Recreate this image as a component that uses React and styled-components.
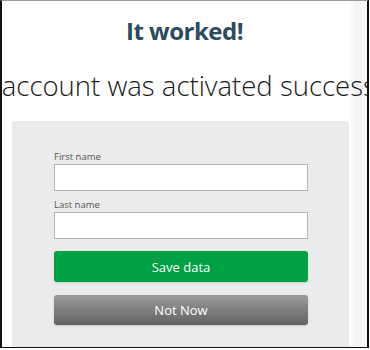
import React from 'react';
import styled, { createGlobalStyle } from 'styled-components';

// style //
const GlobalStyle = createGlobalStyle`
    html, body {
        margin: 0;
        padding: 0;
        background: #FFFFFF;
    }
    * { box-sizing: border-box; }
`;

const Frame = styled.div`
    width: 369px;
    height: 348px;
    border-top: 1px solid #9A9A9A;
    border-left: 2px solid #111111;
    border-right: 2px solid #111111;
    border-bottom: 1px solid #111111;
    background: linear-gradient(to right, #FFFFFF 0%, #FFFFFF 95%, #F3F3F3 97%, #FAFAFA 100%);
    overflow: hidden;
    font-family: "Open Sans", "Liberation Sans", sans-serif;
`;

const Title = styled.h1`
    margin: 0;
    padding-top: 14px;
    text-align: center;
    font-size: 24px;
    font-weight: 700;
    letter-spacing: -0.5px;
    line-height: 32px;
    color: #2C4B5E;
`;

const Message = styled.div`
    margin-top: 19px;
    display: flex;
    justify-content: center;
    white-space: nowrap;
    font-size: 27.5px;
    font-weight: 300;
    line-height: 40px;
    color: #1A1A1A;
`;

const Card = styled.div`
    margin: 15px 0 0 10px;
    width: 337px;
    height: 240px;
    padding: 29px 41px 0 42px;
    background: #EBEBEB;
    border-radius: 3px;
`;

const Label = styled.label`
    display: block;
    font-size: 9.5px;
    line-height: 13px;
    color: #555555;
`;

const Input = styled.input`
    display: block;
    width: 100%;
    height: 27px;
    margin: 1px 0 7px;
    border: 1px solid #B5B5B5;
    background: #FFFFFF;
    outline: none;
`;

const Button = styled.div`
    height: ${p => p.$h}px;
    margin-top: ${p => p.$mt}px;
    border-radius: 3px;
    display: flex;
    align-items: center;
    justify-content: center;
    font-size: 13px;
    color: #FFFFFF;
    background: ${p => p.$bg};
    box-shadow: 0 1px 2px rgba(0,0,0,0.15);
`;

// function //
function App() {
    return (
        <>
            <GlobalStyle />
            <Frame>
                <Title>It worked!</Title>
                <Message>Your account was activated successfully!</Message>
                <Card>
                    <Label>First name</Label>
                    <Input />
                    <Label>Last name</Label>
                    <Input />
                    <Button $h={31} $mt={12} $bg="#00A044">Save data</Button>
                    <Button $h={30} $mt={13} $bg="linear-gradient(to bottom, #9B9B9B, #626262)">Not Now</Button>
                </Card>
            </Frame>
        </>
    );
}

export default App;
